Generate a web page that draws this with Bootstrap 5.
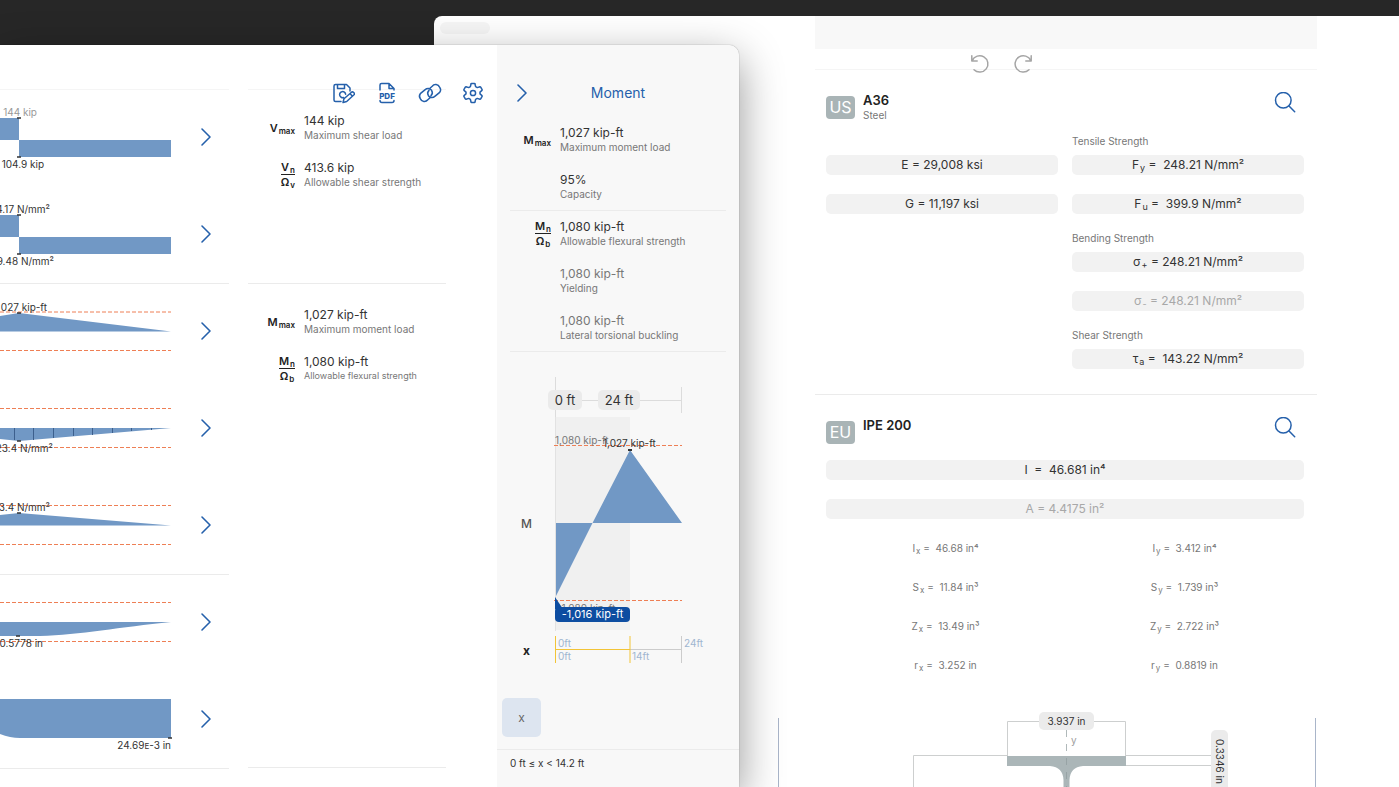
<!DOCTYPE html>
<html lang="en">
<head>
<meta charset="utf-8">
<meta name="viewport" content="width=device-width, initial-scale=1">
<title>Beam analysis – Moment</title>
<link href="https://cdn.jsdelivr.net/npm/bootstrap@5.3.0/dist/css/bootstrap.min.css" rel="stylesheet">
<script src="https://cdn.jsdelivr.net/npm/bootstrap@5.3.0/dist/js/bootstrap.bundle.min.js"></script>
<style>
  :root { --ink:#333; --muted:#777; --faint:#a8a8a8; --accent:#2560ab; --fill:#7198c5; --rule:#ebebeb; }
  body { background:#272727; color:var(--ink); font:12px/14px Inter, "Liberation Sans", sans-serif; }
  .desktop { height:100vh; min-height:700px; }
  .win { bottom:0; background:#fff; overflow:hidden; }
  .win-back { left:31%; right:0; top:16px; border-top-left-radius:8px; }
  .win-front { left:0; top:45px; width:calc(100% - 660px); border-top-right-radius:10px;
    box-shadow:0 0 1px rgba(0,0,0,.6), 0 14px 44px rgba(0,0,0,.42); }
  button { font:inherit; color:inherit; border:0; background:none; padding:0; }
  svg { display:block; }
  svg text { font-family:Inter, "Liberation Sans", sans-serif; font-size:10px; fill:var(--ink); }
  .line-icon { fill:none; stroke:currentColor; stroke-linecap:round; stroke-linejoin:round; }
  .accent { color:var(--accent); }
  .note { font-size:10px; line-height:14px; color:var(--muted); }
  .note-tight { font-size:9px; }
  .quiet { color:var(--muted); }
  .off { color:var(--faint); }
  sub { font-size:9px; line-height:0; bottom:-2px; margin-left:1px; }

  /* front window */
  .results { padding-top:44px; }
  .tools { top:37px; right:13px; gap:21px; }
  .rule-b { border-bottom:1px solid var(--rule); }
  .chart-col { width:229px; margin-right:19px; border-top:1px solid #f5f5f5; }
  .chart-row { height:97px; padding-bottom:3px; }
  .chart-row svg.plot { width:190px; height:97px; flex:none; align-self:flex-start; }
  .chart-row button { margin-left:9px; }
  .value-col { width:198px; border-top:1px solid #f5f5f5; }
  .value-col section { padding-top:14px; }
  .shear { height:194px; }
  .moment { height:484px; }
  .entry { height:47px; gap:9px; }
  .sym { width:47px; font-size:11px; line-height:14px; font-weight:600; color:#222; }
  .sym sub { font-size:8px; }
  .frac span { display:block; text-align:center; }
  .frac span:first-child { border-bottom:1px solid #222; }
  .detail { width:242px; background:#f8f8f8; }
  .detail header { height:71px; padding:38px 0 0 20px; }
  .detail h1 { font-size:14px; line-height:20px; font-weight:400; margin:0 30px 0 0; }
  .detail .sym { width:41px; }
  .detail .group { margin:0 13px; border-bottom:1px solid var(--rule); }
  .detail .group + .group, .group + .plot-box { margin-top:-1px; }
  .pill { background:#ebebeb; border-radius:5px; height:20px; }
  .plot-box button { top:39px; font-size:13px; line-height:20px; }
  .from { left:51px; width:34px; }
  .to { left:101px; width:42px; }
  .tag { left:58px; top:256px; width:75px; height:15px; border-radius:4px; background:#0d4da1; color:#fff; font-size:11px; line-height:15px; }
  .key-x { width:39px; height:39px; margin:8px 0 12px 5px; border-radius:5px; background:#dde5f0; color:#666; }
  .range { height:38px; padding:6px 13px; border-top:1px solid var(--rule); font-size:10px; }

  /* back window */
  .stub { width:50px; height:12px; top:6px; left:6px; border-radius:6px; background:#f6f6f6; }
  .sheet { width:502px; margin-right:82px; }
  .banner { height:33px; background:#f8f8f8; }
  .history { height:21px; border-bottom:1px solid #f5f5f5; gap:23px; padding:5px 0 0 155px; color:#a5a5a5; }
  .block { padding:22px 13px 0 11px; }
  .region { width:29px; height:23px; border-radius:4px; background:#a9b4b6; color:#fff; font-size:16px; line-height:23px; margin-top:4px; }
  .block h2 { font-size:13px; line-height:16px; font-weight:600; margin:0; color:#222; }
  .head { height:39px; }
  .material { height:325px; border-bottom:1px solid var(--rule); }
  .two { display:grid; grid-template-columns:1fr 1fr; column-gap:14px; }
  .field { display:block; width:100%; height:20px; border-radius:5px; background:#f2f2f2; line-height:20px; margin-bottom:19px; }
  .caption { height:20px; line-height:20px; margin-bottom:4px; }
  .set { height:97px; }
  .props { font-size:10px; color:var(--muted); text-align:center; width:100%; table-layout:fixed; margin-top:9px; }
  .props sub { font-size:8px; }
  .props td { height:39px; padding:0; }
  .figure-box { width:538px; margin:34px 83px 0 0; height:90px; border:solid #a9b5c9; border-width:0 1px; }
  .dim { font-size:10px; line-height:18px; color:var(--ink); }
  .dim-w { left:260px; top:-6px; width:55px; height:18px; }
  .dim-t { left:432px; top:12px; width:17px; height:62px; line-height:17px; writing-mode:vertical-rl; }
</style>
</head>
<body>
<div class="desktop position-relative overflow-hidden">

  <main class="win win-back position-absolute">
    <div class="stub position-absolute"></div>
    <div class="sheet ms-auto">
      <div class="banner"></div>
      <div class="history d-flex">
        <button type="button" aria-label="Undo"><svg class="line-icon" width="20" height="20" viewBox="0 0 20 20" stroke-width="1.5"><path d="M1.800 1.800v5.200h5.400M2.200 6.600A8.200 8.200 0 1 1 4 15.800"/></svg></button>
        <button type="button" aria-label="Redo"><svg class="line-icon" width="20" height="20" viewBox="0 0 20 20" stroke-width="1.5"><path d="M18.200 1.800v5.200h-5.400M17.800 6.600A8.200 8.200 0 1 0 16 15.800"/></svg></button>
      </div>

      <section class="block material">
        <div class="head d-flex">
          <span class="region text-center me-2">US</span>
          <div class="flex-grow-1"><h2>A36</h2><div class="note">Steel</div></div>
          <button type="button" class="accent align-self-start me-2" aria-label="Search materials"><svg class="line-icon" width="22" height="22" viewBox="0 0 22 22" stroke-width="1.5"><circle cx="9.300" cy="8.300" r="7.800"/><path d="M15 14l5.700 5.700"/></svg></button>
        </div>
        <div class="two">
          <div class="pt-4">
            <button type="button" class="field">E = 29,008 ksi</button>
            <button type="button" class="field">G = 11,197 ksi</button>
          </div>
          <div>
            <div class="set"><div class="note caption">Tensile Strength</div>
              <button type="button" class="field">F<sub>y</sub> =&nbsp; 248.21 N/mm²</button>
              <button type="button" class="field">F<sub>u</sub> =&nbsp; 399.9 N/mm²</button></div>
            <div class="set"><div class="note caption">Bending Strength</div>
              <button type="button" class="field">σ<sub>+</sub> = 248.21 N/mm²</button>
              <button type="button" class="field off">σ<sub>-</sub> = 248.21 N/mm²</button></div>
            <div class="note caption">Shear Strength</div>
            <button type="button" class="field">τ<sub>a</sub> =&nbsp; 143.22 N/mm²</button>
          </div>
        </div>
      </section>

      <section class="block">
        <div class="head d-flex">
          <span class="region text-center me-2">EU</span>
          <h2 class="flex-grow-1">IPE 200</h2>
          <button type="button" class="accent align-self-start me-2" aria-label="Search sections"><svg class="line-icon" width="22" height="22" viewBox="0 0 22 22" stroke-width="1.5"><circle cx="9.300" cy="8.300" r="7.800"/><path d="M15 14l5.700 5.700"/></svg></button>
        </div>
        <div class="pt-1">
          <button type="button" class="field">I&nbsp; =&nbsp; 46.681 in⁴</button>
          <button type="button" class="field off mb-0">A = 4.4175 in²</button>
        </div>
        <table class="props">
          <tr><td>I<sub>x</sub> =&nbsp; 46.68 in⁴</td><td>I<sub>y</sub> =&nbsp; 3.412 in⁴</td></tr>
          <tr><td>S<sub>x</sub> =&nbsp; 11.84 in³</td><td>S<sub>y</sub> =&nbsp; 1.739 in³</td></tr>
          <tr><td>Z<sub>x</sub> =&nbsp; 13.49 in³</td><td>Z<sub>y</sub> =&nbsp; 2.722 in³</td></tr>
          <tr><td>r<sub>x</sub> =&nbsp; 3.252 in</td><td>r<sub>y</sub> =&nbsp; 0.8819 in</td></tr>
        </table>
      </section>
    </div>

    <div class="figure-box position-relative ms-auto">
      <svg width="536" height="90" viewBox="0 0 536 90">
        <path d="M228.500 38V3.500H346.500V38M228 37.500H134.500V90M347 37.500H433M347 47.500H433" fill="none" stroke="#cdcfcf"/>
        <path d="M228 38H347V48H304Q291 49 290.500 62V90H284.500V62Q284 49 271 48H228Z" fill="#abb6b8"/>
        <path d="M287.500 12V90" stroke="#8f9b9d" stroke-opacity=".7" stroke-dasharray="7 7" fill="none"/>
        <text x="292" y="26" style="fill:#a0a0a0">y</text>
      </svg>
      <button type="button" class="pill dim dim-w position-absolute">3.937 in</button>
      <button type="button" class="pill dim dim-t position-absolute">0.3346 in</button>
    </div>
  </main>

  <div class="win win-front position-absolute d-flex">
    <div class="results position-relative d-flex flex-grow-1 align-items-start">
      <div class="tools accent position-absolute d-flex">
        <button type="button" aria-label="Save"><svg class="line-icon" width="22" height="22" viewBox="0 0 22 22" stroke-width="1.500"><path d="M8 19.500H2.500Q1 19.500 1 18V4Q1 2.500 2.500 2.500H13.500L17 6V9M4.500 2.700V6.500H11.500V2.700M10.500 15.500A3 3 0 1 1 12.600 12.200M10 20.500L11 16.800L18.500 10.200Q19.500 9.400 20.700 10.500Q22 11.800 21 12.800L13.700 19.500ZM17 11.600L19.400 14.200"/></svg></button>
        <button type="button" aria-label="Export PDF"><svg class="line-icon" width="22" height="22" viewBox="0 0 22 22" stroke-width="1.500"><path d="M4 8V3Q4 1.500 5.500 1.500H13L18 6.500V8M13 1.500V6.500H18M4 18.500Q4 20.500 6 20.500H16Q18 20.500 18 18.500"/><text x="11" y="16.500" text-anchor="middle" style="font-size:8px;font-weight:800;fill:currentColor;stroke:none">PDF</text></svg></button>
        <button type="button" aria-label="Copy link"><svg class="line-icon overflow-visible" width="22" height="22" viewBox="0 0 22 22" stroke-width="1.500"><path d="M11.600 15.300L8.800 17.800A4.300 4.300 0 0 1 1.400 16.900A4.400 4.400 0 0 1 1.300 11.700L6.200 7.600A4.400 4.400 0 0 1 12.600 8.300A4.300 4.300 0 0 1 12 13.600M10.400 6.700L13.200 4.200A4.300 4.300 0 0 1 20.600 5.100A4.400 4.400 0 0 1 20.700 10.300L15.800 14.400A4.400 4.400 0 0 1 9.400 13.700A4.300 4.300 0 0 1 10 8.400"/></svg></button>
        <button type="button" aria-label="Settings"><svg class="line-icon" width="22" height="22" viewBox="0 0 22 22" stroke-width="1.500"><path d="M9 2Q9 1.500 9.600 1.500H12.400Q13 1.500 13 2L13.600 4.600L15.300 5.600L17.900 4.800Q18.400 4.700 18.700 5.100L20.100 7.600Q20.300 8 20 8.400L18 10.100V11.900L20 13.600Q20.300 14 20.100 14.400L18.700 16.900Q18.400 17.300 17.900 17.200L15.300 16.400L13.600 17.400L13 20Q13 20.500 12.400 20.500H9.600Q9 20.500 9 20L8.400 17.400L6.700 16.400L4.100 17.200Q3.600 17.300 3.300 16.900L1.900 14.400Q1.700 14 2 13.600L4 11.900V10.100L2 8.400Q1.700 8 1.900 7.600L3.300 5.100Q3.600 4.700 4.100 4.800L6.700 5.600L8.400 4.600Z"/><circle cx="11" cy="11" r="2.600"/></svg></button>
      </div>

      <div class="chart-col accent">
        <div class="chart-row d-flex align-items-center">
          <svg class="plot" viewBox="0 0 190 97"><path d="M0 28H19V50H171V67H19V50H0Z" fill="#7198c5"/><path d="M17 28H21M17 67H21" stroke="#333" stroke-width="1.500"/><text x="37" y="26" text-anchor="end" style="fill:#999">144 kip</text><text x="44" y="78" text-anchor="end">104.9 kip</text></svg>
          <button type="button" aria-label="Shear force"><svg class="line-icon" width="14" height="20" viewBox="0 0 14 20" stroke-width="1.600"><path d="M3 2L11 10L3 18"/></svg></button>
        </div>
        <div class="chart-row rule-b d-flex align-items-center">
          <svg class="plot" viewBox="0 0 190 97"><path d="M0 28H19V50H171V67H19V50H0Z" fill="#7198c5"/><path d="M17 28H21M17 67H21" stroke="#333" stroke-width="1.500"/><text x="50" y="26" text-anchor="end">4.17 N/mm²</text><text x="54" y="78" text-anchor="end">9.48 N/mm²</text></svg>
          <button type="button" aria-label="Shear stress"><svg class="line-icon" width="14" height="20" viewBox="0 0 14 20" stroke-width="1.600"><path d="M3 2L11 10L3 18"/></svg></button>
        </div>
        <div class="chart-row d-flex align-items-center">
          <svg class="plot" viewBox="0 0 190 97"><path d="M0 28H171M0 66.500H171" stroke="#ee7f55" stroke-dasharray="4 2"/><path d="M0 32L19 29L171 47.500H0Z" fill="#7198c5"/><path d="M17 29H21" stroke="#333" stroke-width="1.500"/><text x="47" y="27" text-anchor="end">027 kip-ft</text></svg>
          <button type="button" aria-label="Moment"><svg class="line-icon" width="14" height="20" viewBox="0 0 14 20" stroke-width="1.600"><path d="M3 2L11 10L3 18"/></svg></button>
        </div>
        <div class="chart-row d-flex align-items-center">
          <svg class="plot" viewBox="0 0 190 97"><path d="M0 27.500H171M0 66.500H171" stroke="#ee7f55" stroke-dasharray="4 2"/><path d="M0 58L19 60L171 47H0Z" fill="#7198c5"/><path d="M14.500 47V59M33.500 47V59M53.500 47V57M73.500 47V55M92.500 47V54M112.500 47V52M131.500 47V50M151.500 47V49" stroke="#3c5f8d"/><path d="M17 60H21" stroke="#333" stroke-width="1.500"/><text x="53" y="71" text-anchor="end">23.4 N/mm²</text></svg>
          <button type="button" aria-label="Bending stress, top"><svg class="line-icon" width="14" height="20" viewBox="0 0 14 20" stroke-width="1.600"><path d="M3 2L11 10L3 18"/></svg></button>
        </div>
        <div class="chart-row rule-b d-flex align-items-center">
          <svg class="plot" viewBox="0 0 190 97"><path d="M0 27.500H171M0 66.500H171" stroke="#ee7f55" stroke-dasharray="4 2"/><path d="M0 37L19 35L171 47.500H0Z" fill="#7198c5"/><path d="M17 35H21" stroke="#333" stroke-width="1.500"/><text x="50" y="33" text-anchor="end">3.4 N/mm²</text></svg>
          <button type="button" aria-label="Bending stress, bottom"><svg class="line-icon" width="14" height="20" viewBox="0 0 14 20" stroke-width="1.600"><path d="M3 2L11 10L3 18"/></svg></button>
        </div>
        <div class="chart-row d-flex align-items-center">
          <svg class="plot" viewBox="0 0 190 97"><path d="M0 27.500H171M0 66.500H171" stroke="#ee7f55" stroke-dasharray="4 2"/><path d="M0 61H40C80 60 120 52 171 47H0Z" fill="#7198c5"/><path d="M16 61H20" stroke="#333" stroke-width="1.500"/><text x="43" y="72" text-anchor="end">0.5778 in</text></svg>
          <button type="button" aria-label="Deflection"><svg class="line-icon" width="14" height="20" viewBox="0 0 14 20" stroke-width="1.600"><path d="M3 2L11 10L3 18"/></svg></button>
        </div>
        <div class="chart-row rule-b d-flex align-items-center">
          <svg class="plot" viewBox="0 0 190 97"><path d="M0 27H171V66H20Q10 66 0 62Z" fill="#7198c5"/><path d="M168 66H172" stroke="#333" stroke-width="1.500"/><text x="171" y="77" text-anchor="end">24.69<tspan style="font-size:8px">E</tspan>-3 in</text></svg>
          <button type="button" aria-label="Slope"><svg class="line-icon" width="14" height="20" viewBox="0 0 14 20" stroke-width="1.600"><path d="M3 2L11 10L3 18"/></svg></button>
        </div>
      </div>

      <div class="value-col">
        <section class="shear rule-b">
          <div class="entry d-flex align-items-center"><div class="sym text-end">V<sub>max</sub></div><div><div>144 kip</div><div class="note">Maximum shear load</div></div></div>
          <div class="entry d-flex align-items-center"><div class="sym d-flex justify-content-end"><div class="frac"><span>V<sub>n</sub></span><span>Ω<sub>v</sub></span></div></div><div><div>413.6 kip</div><div class="note">Allowable shear strength</div></div></div>
        </section>
        <section class="moment rule-b">
          <div class="entry d-flex align-items-center"><div class="sym text-end">M<sub>max</sub></div><div><div>1,027 kip-ft</div><div class="note">Maximum moment load</div></div></div>
          <div class="entry d-flex align-items-center"><div class="sym d-flex justify-content-end"><div class="frac"><span>M<sub>n</sub></span><span>Ω<sub>b</sub></span></div></div><div><div>1,080 kip-ft</div><div class="note note-tight">Allowable flexural strength</div></div></div>
        </section>
      </div>
    </div>

    <aside class="detail flex-shrink-0">
      <header class="d-flex align-items-start accent">
        <button type="button" aria-label="Close details"><svg class="line-icon" width="10" height="20" viewBox="0 0 10 20" stroke-width="1.600"><path d="M1 2L9 10L1 18"/></svg></button>
        <h1 class="flex-grow-1 text-center">Moment</h1>
      </header>
      <div class="group">
        <div class="entry d-flex align-items-center"><div class="sym text-end">M<sub>max</sub></div><div><div>1,027 kip-ft</div><div class="note">Maximum moment load</div></div></div>
        <div class="entry d-flex align-items-center"><div class="sym"></div><div><div>95%</div><div class="note">Capacity</div></div></div>
      </div>
      <div class="group">
        <div class="entry d-flex align-items-center"><div class="sym d-flex justify-content-end"><div class="frac"><span>M<sub>n</sub></span><span>Ω<sub>b</sub></span></div></div><div><div>1,080 kip-ft</div><div class="note">Allowable flexural strength</div></div></div>
        <div class="entry d-flex align-items-center quiet"><div class="sym"></div><div><div>1,080 kip-ft</div><div class="note">Yielding</div></div></div>
        <div class="entry d-flex align-items-center quiet"><div class="sym"></div><div><div>1,080 kip-ft</div><div class="note">Lateral torsional buckling</div></div></div>
      </div>

      <div class="plot-box position-relative">
        <svg width="242" height="339" viewBox="0 0 242 339">
          <rect x="58" y="66" width="75" height="213" fill="#f0f0f0"/>
          <path d="M58.500 26V66M58 49.500H184M184.500 36V62" stroke="#dcdcdc" fill="none"/>
          <path d="M58.500 66V280" stroke="#e2e2e2"/>
          <path d="M57 94.500H185M57 249.500H185" stroke="#ee7f55" stroke-dasharray="4 2"/>
          <path d="M59 172H95.500L59 245ZM95.500 172L133 99L185 172Z" fill="#7198c5"/>
          <text x="58" y="93" style="fill:#777">1,080 kip-ft</text>
          <path d="M131 99H135" stroke="#333" stroke-width="2"/>
          <text x="106" y="96">1,027 kip-ft</text>
          <text x="60" y="261" style="fill:#777">-1,080 kip-ft</text>
          <path d="M58 246L66 258H58Z" fill="#0d4da1"/>
          <text x="24" y="177" style="font-size:12px;font-weight:500;fill:#555">M</text>
          <text x="26" y="304" style="font-size:12px;font-weight:700;fill:#222">x</text>
          <path d="M133 298.500H184M184.500 285V312" stroke="#ccc" fill="none"/>
          <path d="M58.500 285V312M58 298.500H133M133 285V312" stroke="#f2c437" fill="none"/>
          <g style="--ink:#9fb6d0"><text x="61" y="296">0ft</text><text x="61" y="309">0ft</text><text x="135" y="309">14ft</text><text x="187" y="296">24ft</text></g>
        </svg>
        <button type="button" class="pill from position-absolute">0 ft</button>
        <button type="button" class="pill to position-absolute">24 ft</button>
        <div class="tag position-absolute text-center">-1,016 kip-ft</div>
      </div>
      <button type="button" class="key-x d-block">x</button>
      <div class="range">0 ft ≤ x &lt; 14.2 ft</div>
    </aside>
  </div>
</div>
</body>
</html>
